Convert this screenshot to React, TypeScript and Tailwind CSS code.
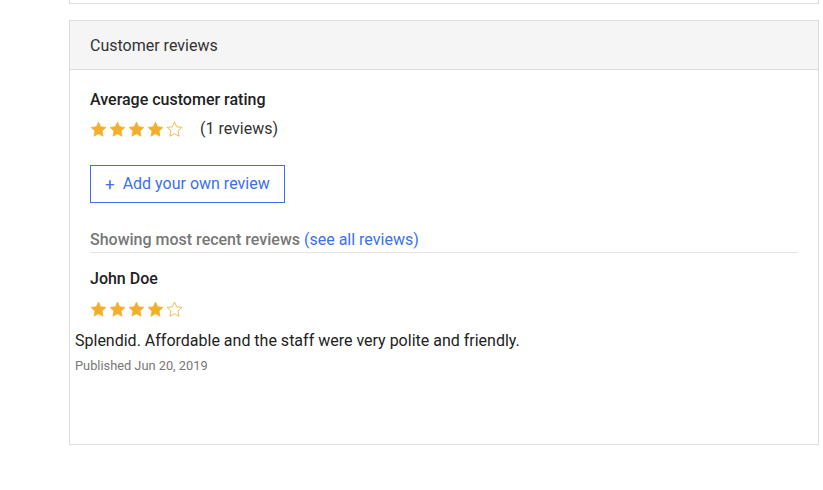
import React from "react";

const Star = ({ filled }: { filled: boolean }) => (
  <svg width="17" height="17" viewBox="0 0 24 24" className="block">
    <polygon
      points="12,1.5 15.1,8.1 22.5,9 17,14.1 18.4,21.5 12,17.9 5.6,21.5 7,14.1 1.5,9 8.9,8.1"
      fill={filled ? "#f3ae2b" : "none"}
      stroke="#f3ae2b"
      strokeWidth={filled ? 1 : 1.2}
      strokeLinejoin="round"
    />
  </svg>
);

const Stars = ({ n }: { n: number }) => (
  <div className="flex gap-[2px]">
    {[0, 1, 2, 3, 4].map((i) => (
      <Star key={i} filled={i < n} />
    ))}
  </div>
);

export default function App() {
  return (
    <div
      className="w-[823px] h-[490px] bg-white text-[#222]"
      style={{ fontFamily: "Roboto, 'Noto Sans', sans-serif" }}
    >
      <div className="ml-[69px] w-[750px] h-[4px] border-x border-b border-[#ddd]" />
      <div className="ml-[69px] mt-[16px] w-[750px] h-[425px] border border-[#ddd] flex flex-col">
        <div className="h-[49px] pt-[1px] bg-[#f5f5f5] border-b border-[#ddd] flex items-center px-[20px] text-[16px] text-[#333]">
          Customer reviews
        </div>
        <div className="px-[20px] pt-[19px] flex flex-col">
          <div className="text-[16px] font-medium leading-[22px] text-[#222]">
            Average customer rating
          </div>
          <div className="flex items-center mt-[8px] h-[20px]">
            <Stars n={4} />
            <span className="ml-[17px] text-[16px] text-[#333]">(1 reviews)</span>
          </div>
          <div className="mt-[26px]">
            <button className="h-[38px] px-[14px] border border-[#3b70f5] text-[#3b70f5] text-[16px] flex items-center gap-[8px] bg-white">
              <span className="text-[17px] leading-none">+</span>
              <span>Add your own review</span>
            </button>
          </div>
          <div className="mt-[26px] pb-[1px] border-b border-[#e3e3e3] text-[16px] leading-[22px]">
            <span className="font-medium text-[#777]">Showing most recent reviews</span>{" "}
            <span className="text-[#3b70f5]">(see all reviews)</span>
          </div>
          <div className="mt-[15px] text-[16px] font-medium leading-[22px] text-[#222]">John Doe</div>
          <div className="mt-[9px] h-[20px] flex items-center">
            <Stars n={4} />
          </div>
          <div className="ml-[-15px] mt-[11px] text-[16px] leading-[22px] text-[#222]">
            Splendid. Affordable and the staff were very polite and friendly.
          </div>
          <div className="ml-[-15px] mt-[6px] text-[12.8px] leading-[16px] text-[#777]">
            Published Jun 20, 2019
          </div>
        </div>
      </div>
    </div>
  );
}
